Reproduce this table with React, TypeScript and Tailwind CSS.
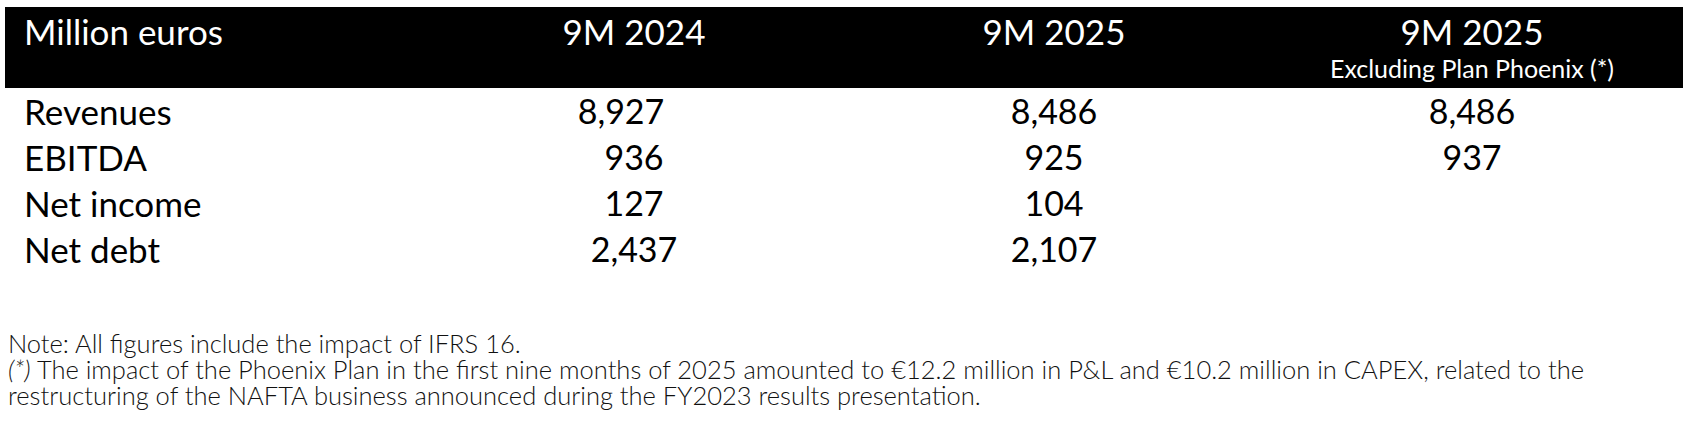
import React from "react";

type Row = {
  label: string;
  v2024: string;
  v2025: string;
  vExcl?: string;
  shift2024?: boolean;
};

const rows: Row[] = [
  { label: "Revenues", v2024: "8,927", v2025: "8,486", vExcl: "8,486", shift2024: true },
  { label: "EBITDA", v2024: "936", v2025: "925", vExcl: "937" },
  { label: "Net income", v2024: "127", v2025: "104" },
  { label: "Net debt", v2024: "2,437", v2025: "2,107" },
];

const grid = "grid grid-cols-[419px_420px_420px_416px]";

export default function App() {
  return (
    <div
      className="w-[1683px] h-[427px] bg-white text-black overflow-hidden"
      style={{ fontFamily: "Lato, 'Open Sans', sans-serif" }}
    >
      {/* Header bar */}
      <div className={`${grid} ml-[5px] mt-[7px] h-[81px] bg-black text-white`}>
        <div className="pl-[19px] pt-[7px] text-[35px] leading-[35px]">Million euros</div>
        <div className="pt-[7px] text-center text-[35px] leading-[35px]">9M 2024</div>
        <div className="pt-[7px] text-center text-[35px] leading-[35px]">9M 2025</div>
        <div className="pt-[7px] flex flex-col items-center">
          <span className="text-[35px] leading-[35px]">9M 2025</span>
          <span className="mt-[7px] text-[25px] leading-[25px] whitespace-nowrap">
            Excluding Plan Phoenix (*)
          </span>
        </div>
      </div>

      {/* Body rows */}
      <div className="ml-[5px]">
        {rows.map((r) => (
          <div key={r.label} className={`${grid} h-[46px] leading-[46px]`}>
            <div className="pl-[19px] text-[35px]">{r.label}</div>
            <div className={`text-center text-[34px] ${r.shift2024 ? "pr-[26px]" : ""}`}>
              {r.v2024}
            </div>
            <div className="text-center text-[34px]">{r.v2025}</div>
            <div className="text-center text-[34px]">{r.vExcl ?? ""}</div>
          </div>
        ))}
      </div>

      {/* Notes */}
      <div className="mt-[58px] pl-[8px] text-[25.5px] leading-[26px] font-light text-[#111]">
        <div className="whitespace-nowrap">Note: All figures include the impact of IFRS 16.</div>
        <div className="whitespace-nowrap">
          <span className="italic">(*)</span> The impact of the Phoenix Plan in the first nine
          months of 2025 amounted to €12.2 million in P&amp;L and €10.2 million in CAPEX, related
          to the
        </div>
        <div className="whitespace-nowrap">
          restructuring of the NAFTA business announced during the FY2023 results presentation.
        </div>
      </div>
    </div>
  );
}
